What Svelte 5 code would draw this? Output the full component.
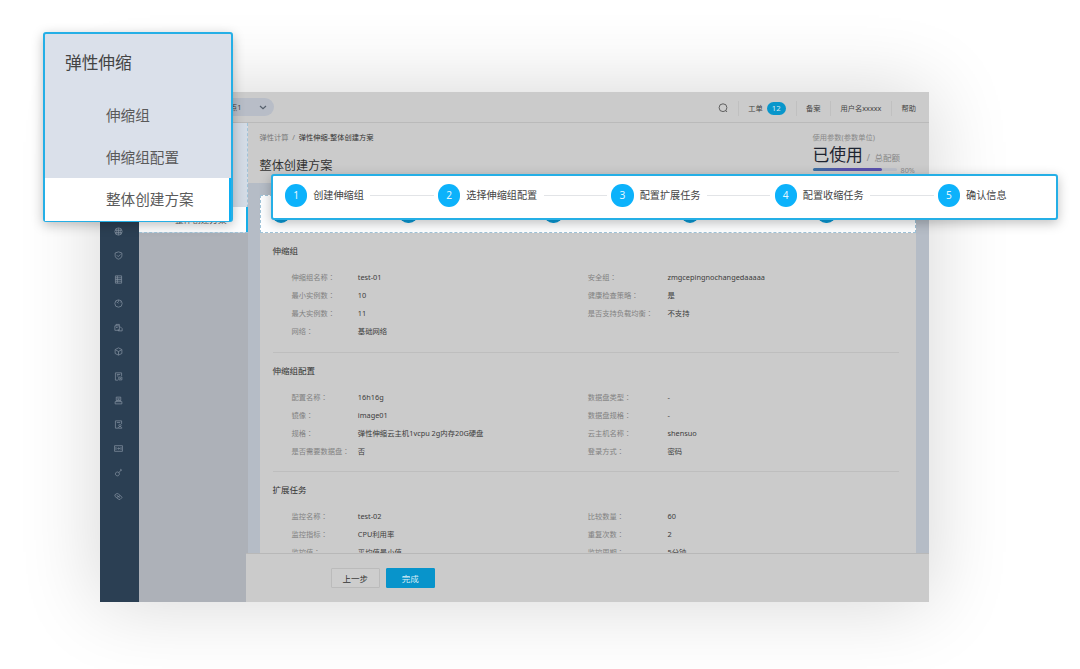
<script lang="ts">
  const menu = ['伸缩组', '伸缩组配置', '整体创建方案'];
  const steps = ['创建伸缩组', '选择伸缩组配置', '配置扩展任务', '配置收缩任务', '确认信息'];

  type Row = [string, string, string?, string?];

  const sections: { title: string; rows: Row[] }[] = [
    {
      title: '伸缩组',
      rows: [
        ['伸缩组名称', 'test-01', '安全组', 'zmgcepingnochangedaaaaa'],
        ['最小实例数', '10', '健康检查策略', '是'],
        ['最大实例数', '11', '是否支持负载均衡', '不支持'],
        ['网络', '基础网络']
      ]
    },
    {
      title: '伸缩组配置',
      rows: [
        ['配置名称', '16h16g', '数据盘类型', '-'],
        ['镜像', 'image01', '数据盘规格', '-'],
        ['规格', '弹性伸缩云主机1vcpu 2g内存20G硬盘', '云主机名称', 'shensuo'],
        ['是否需要数据盘', '否', '登录方式', '密码']
      ]
    },
    {
      title: '扩展任务',
      rows: [
        ['监控名称', 'test-02', '比较数量', '60'],
        ['监控指标', 'CPU利用率', '重复次数', '2'],
        ['监控值', '平均值最小值', '监控周期', '5分钟']
      ]
    }
  ];

  // rail icons, drawn on a 16x16 grid
  const icons = [
    'M8 1.5a6.5 6.5 0 1 0 0 13a6.5 6.5 0 0 0 0-13M2 6h12M2 10h12M8 2v12M5 3v10M11 3v10',
    'M8 1.5L14 3.5V8c0 3.5-2.5 5.5-6 6.5C4.5 13.5 2 11.5 2 8V3.5zM5 7.5l2.5 2.5L11.5 6',
    'M2.5 1.5h11v13h-11zM2.5 5h11M2.5 8h11M2.5 11h11M6 1.5v13',
    'M8 1.5a6.5 6.5 0 1 0 0 13a6.5 6.5 0 0 0 0-13M8 7.5L4.5 5M8 2v3M12 5l-1.5 1',
    'M1.5 5h8v8h-8zM3.5 5V2.5h6V5M3.5 8h3M9.5 7h2l3 3v4h-7v-3',
    'M8 1.5l6 3v7l-6 3l-6-3v-7zM2.5 5L8 8l5.5-3M8 8v6',
    'M13.5 7V1.5h-11v13H7M5 4.5h6M5 7h3M8.5 9h5.5v5h-5.5zM10 11.5h2.5',
    'M4 2h8v6H4zM6 4l4 3M10 4L6 7M2 14v-4h12v4zM5 10V8M11 10V8',
    'M13.5 7V1.5h-11v13H7M5 4.5h6M10.5 7.5a2 2 0 1 0 .1 0M7.5 14.5c.5-4 5.5-4 6.5 0z',
    'M1 3h14v10H1zM3.5 5.5v5M12.5 5.5v5M6 8h4M8 6l2 2l-2 2',
    'M6 7a3.5 3.5 0 1 0 .1 0M8.5 8.5L13 3M11 2l3 2.5',
    'M1.5 5l4-2.5l3 1.5l6 5.5l-4 4l-3-1L2 8zM5 5.5l5 5M5 9.5l6-3'
  ];
</script>

{#snippet stepBar()}
  <ol class="steps">
    {#each steps as step, i}
      <li>
        <span class="num">{i + 1}</span>
        <span class="step-name">{step}</span>
        {#if i < steps.length - 1}<i class="line"></i>{/if}
      </li>
    {/each}
  </ol>
{/snippet}

{#snippet fieldLabel(text)}
  <span class="label">{text}<span class="colon">：</span></span>
{/snippet}

<main class="stage">
  <div class="window">
    <aside class="rail">
      {#each icons as d}
        <span class="rail-item">
          <svg viewBox="0 0 16 16" width="9" height="9"><path {d} /></svg>
        </span>
      {/each}
    </aside>

    <div class="body">
      <header class="topbar">
        <div class="region">
          <span>节点1</span>
          <svg viewBox="0 0 8 5" width="8" height="5"><path d="M1 1l3 2.6L7 1" /></svg>
        </div>
        <nav class="top-links">
          <span>
            <svg class="search" viewBox="0 0 10 10" width="10" height="10">
              <circle cx="5" cy="4.7" r="3.9" /><path d="M7.7 7.5l1.3 1.5" />
            </svg>
          </span>
          <span>工单<b class="badge">12</b></span>
          <span>备案</span>
          <span>用户名xxxxx</span>
          <span>帮助</span>
        </nav>
      </header>

      <div class="columns">
        <aside class="side">
          <div class="side-menu">
            <div class="side-active">整体创建方案</div>
          </div>
        </aside>

        <section class="page">
          <div class="page-head">
            <div>
              <p class="crumb">弹性计算&nbsp; /&nbsp; <b>弹性伸缩-整体创建方案</b></p>
              <h1>整体创建方案</h1>
            </div>
            <div class="quota">
              <p class="quota-label">使用参数(参数单位)</p>
              <p class="quota-value"><b>已使用</b><span>/&nbsp; 总配额</span></p>
              <div class="quota-bar"><div class="track"><i style="width:83%"></i></div><span>80%</span></div>
            </div>
          </div>

          <div class="scroll">
            <div class="step-card">{@render stepBar()}</div>
            <div class="details">
              {#each sections as section}
                <div class="section">
                  <h2>{section.title}</h2>
                  {#each section.rows as [label, value, label2, value2]}
                    <div class="row">
                      {@render fieldLabel(label)}
                      <span>{value}</span>
                      {#if label2}
                        {@render fieldLabel(label2)}
                        <span>{value2}</span>
                      {/if}
                    </div>
                  {/each}
                </div>
              {/each}
            </div>
          </div>

          <footer class="actions">
            <button>上一步</button>
            <button class="primary">完成</button>
          </footer>
        </section>
      </div>
    </div>
  </div>

  <div class="callout menu-callout">
    <h3>弹性伸缩</h3>
    {#each menu as item, i}
      <div class="menu-item" class:active={i === 2}>{item}</div>
    {/each}
  </div>

  <div class="callout step-callout">{@render stepBar()}</div>
</main>

<style>
  :global(body) { margin: 0; background: #fff; }

  .stage {
    position: relative;
    box-sizing: border-box;
    width: 1080px;
    height: 669px;
    padding: 92px 0 0 99.5px;
    overflow: hidden;
    font-family: "Noto Sans", "Noto Sans CJK SC", sans-serif;
    font-size: 7.25px;
    color: #444;
    white-space: nowrap;
  }
  .stage :is(p, h1, h2, h3, ol) { margin: 0; padding: 0; font-weight: 400; }
  svg { fill: none; stroke: currentColor; }

  .window {
    display: flex;
    width: 829.5px;
    height: 510px;
    background: #cbcbcb;
    box-shadow: 0 0 74px 2px rgba(0, 0, 0, 0.16);
  }

  .rail {
    box-sizing: border-box;
    width: 39.5px;
    padding-top: 127px;
    background: #2b3f53;
    color: #8492a1;
  }
  .rail-item {
    display: flex;
    align-items: center;
    justify-content: center;
    height: 24.17px;
    padding-right: 2px;
  }
  .rail-item svg { stroke-width: 1.3; }

  .body { flex: 1; display: flex; flex-direction: column; min-width: 0; }

  .topbar {
    box-sizing: border-box;
    display: flex;
    align-items: center;
    justify-content: space-between;
    height: 31px;
    padding-right: 13px;
    border-bottom: 1px solid #bababa;
  }
  .region {
    box-sizing: border-box;
    display: flex;
    align-items: center;
    justify-content: flex-end;
    gap: 17px;
    width: 134.5px;
    height: 18px;
    padding-right: 7px;
    border-radius: 9px;
    background: #b8bdc7;
  }
  .region svg { stroke: #56606d; stroke-width: 1.2; }
  .top-links { display: flex; align-items: center; padding-top: 2px; }
  .top-links span {
    display: flex;
    align-items: center;
    height: 15px;
    padding: 0 9.9px 0 9.2px;
    border-left: 1px solid #c0c0c0;
  }
  .top-links span:first-child { border: 0; }
  .top-links span:last-child { padding-right: 0; }
  .search { stroke: #555; stroke-width: 0.9; }
  .badge {
    width: 19px;
    margin-left: 4px;
    border-radius: 7px;
    background: #0896cb;
    color: #d4e9f1;
    font-weight: 400;
    font-size: 7.8px;
    line-height: 13px;
    text-align: center;
  }

  .columns { flex: 1; display: flex; min-height: 0; }

  .side { width: 108.5px; background: #adb1b8; }
  .side-menu {
    box-sizing: border-box;
    display: flex;
    flex-direction: column;
    justify-content: flex-end;
    height: 110px;
    border-right: 1px dashed #9fc3d8;
    border-bottom: 1px dashed #9fc3d8;
    background: #d3dbe5;
  }
  .side-active {
    height: 25px;
    margin-right: -1px;
    padding-left: 36px;
    border-right: 2px solid #15aee8;
    background: #fdfeff;
    color: #666;
    font-size: 8.6px;
    line-height: 26px;
  }

  .page { flex: 1; display: flex; flex-direction: column; min-width: 0; background: #b5bcc6; }
  .page-head {
    box-sizing: border-box;
    display: flex;
    justify-content: space-between;
    height: 60px;
    padding: 8px 13px 0 12px;
    background: #cbcbcb;
  }
  .crumb { color: #777; line-height: 13px; }
  .crumb b { color: #333; font-weight: 400; }
  h1 { margin-top: 13px !important; color: #333; font-size: 12.15px; line-height: 18px; }
  .quota { width: 103.5px; color: #888; }
  .quota-label { line-height: 13px; }
  .quota-value { display: flex; align-items: baseline; gap: 4px; height: 24px; font-size: 8.5px; line-height: 22px; }
  .quota-value b { color: #1e2430; font-size: 16.8px; font-weight: 400; }
  .quota-bar { display: flex; align-items: center; gap: 4px; height: 3px; }
  .quota-bar span { padding-top: 1px; }
  .track { width: 84px; height: 3px; border-radius: 2px; background: #bbbfca; }
  .track i { display: block; height: 3px; border-radius: 2px; background: linear-gradient(90deg, #3a70a0, #5950ac 45%, #5950ac); }

  .scroll { flex: 1; min-height: 0; overflow: hidden; padding: 12px 13px 0 12px; }
  .step-card {
    box-sizing: border-box;
    display: flex;
    align-items: center;
    height: 38px;
    padding-left: 11px;
    border: 1px dashed #9fc3d8;
    background: #fdfeff;
    font-size: 8.5px;
  }
  .details { padding: 0 17.5px 0 13px; background: #cbcbcb; }
  .section {
    box-sizing: border-box;
    height: 119.5px;
    border-bottom: 1px solid #bebebe;
  }
  h2 { color: #333; font-size: 8.5px; line-height: 36px; }
  .row {
    display: grid;
    grid-template-columns: 66.3px 230px 79.7px 1fr;
    height: 18.15px;
    padding-left: 19px;
    color: #3c3c3c;
    font-size: 7.35px;
    line-height: 17.6px;
  }
  .label { color: #828282; font-size: 7.25px; }
  .colon { font-family: "Noto Sans CJK TC", sans-serif; }

  .actions {
    box-sizing: border-box;
    display: flex;
    align-items: center;
    gap: 6.5px;
    height: 49px;
    margin-left: -2px;
    padding-left: 85.5px;
    border-top: 1px solid #b8b8b8;
    background: #cbcbcb;
  }
  button {
    box-sizing: border-box;
    width: 48.5px;
    height: 19.5px;
    padding: 0;
    border: 1px solid #bbb;
    border-radius: 1px;
    background: #cdcdcd;
    color: #333;
    font: inherit;
    font-size: 8.5px;
  }
  .primary { border-color: #0894cb; background: #0894cb; color: #d7edf6; }

  .steps { display: flex; align-items: center; list-style: none; }
  .steps li { display: flex; align-items: center; }
  .num {
    width: 2.18em;
    height: 2.18em;
    border-radius: 50%;
    background: #0cb2fb;
    color: #e6f7ff;
    line-height: 2.18em;
    text-align: center;
  }
  .step-name { margin-left: 0.6em; }
  .line { width: 6.25em; margin: 0 0.42em 0 0.65em; border-top: 1px solid #e2e4e7; }
  .step-card .num { background: #099bd8; }
  .step-card .line { width: 6.2em; }

  .callout {
    position: absolute;
    box-sizing: border-box;
    border: 2px solid #25afe6;
    border-radius: 3px;
    box-shadow: 0 3px 12px rgba(0, 0, 0, 0.25);
  }
  .menu-callout {
    top: 32px;
    left: 43px;
    width: 190px;
    height: 190px;
    background: #dae0ea;
    color: #5a5a5a;
    font-size: 14.6px;
  }
  h3 { padding: 11px 0 14px 20px !important; color: #444; font-size: 16.7px; line-height: 36px; }
  .menu-item { padding-left: 61px; line-height: 41.5px; }
  .menu-item.active { border-right: 2px solid #0caef2; background: #fff; line-height: 43px; }
  .step-callout {
    top: 174px;
    left: 271px;
    display: flex;
    align-items: center;
    width: 787px;
    height: 46px;
    padding: 0 0 3px 12px;
    background: #fff;
    font-size: 10.15px;
  }
  .step-callout .step-name { margin-top: -2px; }
</style>
